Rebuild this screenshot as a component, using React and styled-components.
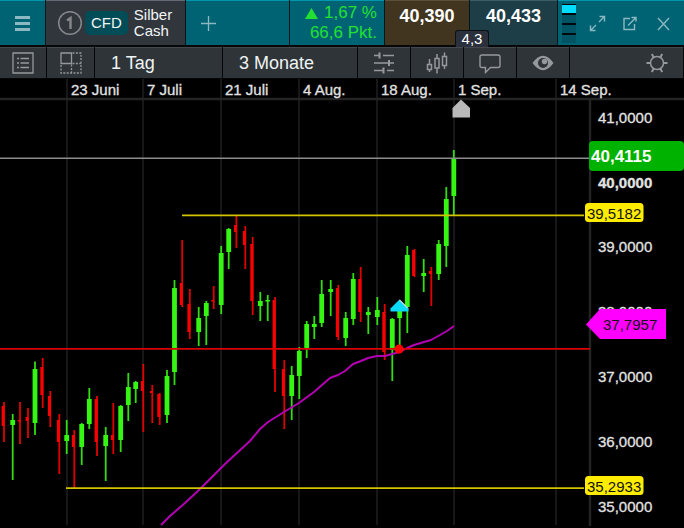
import React from "react";
import styled, { createGlobalStyle } from "styled-components";

const GlobalStyle = createGlobalStyle`
  * {
    box-sizing: border-box;
  }
  body {
    margin: 0;
    background: #000;
    font-family: "Liberation Sans", Arial, sans-serif;
  }
  button {
    font: inherit;
    color: inherit;
    border: 0;
    margin: 0;
    padding: 0;
    background: none;
    cursor: pointer;
  }
  svg {
    display: block;
  }
`;

const Header = styled.header`
  display: flex;
  gap: 1px;
  height: 45px;
  background: #00171c;
`;

const HeaderButton = styled.button`
  display: flex;
  align-items: center;
  justify-content: ${(props) => (props.$grow ? "flex-start" : "center")};
  flex: ${(props) => (props.$grow ? "1 0 auto" : "none")};
  width: ${(props) => props.$width || "auto"};
  padding: 0 15px;
  color: #8bb9c1;
  background: #006374;
  border-top: 1px solid #0098ae;
`;

const Instrument = styled.div`
  display: flex;
  align-items: center;
  width: 139px;
  padding-left: 11px;
  background: #31363c;
  border-top: 1px solid #626a76;
  color: #f2f5f6;
`;

const Badge = styled.span`
  margin: 0 6px 0 2px;
  padding: 3px 6px;
  border-radius: 5px;
  background: #004c57;
  font-size: 15px;
  line-height: 18px;
`;

const Name = styled.span`
  font-size: 15px;
  line-height: 16px;
`;

const Change = styled.div`
  width: 94px;
  padding-right: 7px;
  background: #006374;
  border-top: 1px solid #0098ae;
  color: #22e032;
  font-size: 17px;
  line-height: 20px;
  text-align: right;
  white-space: nowrap;
`;

const ChangeLine = styled.div`
  display: flex;
  align-items: center;
  justify-content: flex-end;
  gap: 6px;
  padding-top: 2px;
  height: 22px;
`;

const Quote = styled.button`
  position: relative;
  width: ${(props) => props.$width};
  height: 45px;
  padding-bottom: 14px;
  background: ${(props) => props.$color};
  border-top: 1px solid ${(props) => props.$edge};
  color: #fff;
  font-size: 18px;
  font-weight: bold;
`;

const Spread = styled.span`
  position: absolute;
  right: -20px;
  bottom: -2px;
  z-index: 1;
  width: 34px;
  height: 17px;
  border: 1px solid #0b0f16;
  border-bottom: 0;
  border-radius: 3px 3px 0 0;
  background: #2b313c;
  font-size: 15px;
  font-weight: normal;
  line-height: 16px;
  text-align: center;
`;

const WindowTools = styled.div`
  display: flex;
  align-items: center;
  width: 126px;
  padding-left: 4px;
  background: #006374;
  border-top: 1px solid #0098ae;
`;

const Meter = styled.div`
  display: flex;
  flex-direction: column;
  gap: 2px;
  margin-right: 5px;
  padding-top: 1px;
  background: #00090b;
`;

const MeterStep = styled.span`
  width: 14px;
  height: 8px;
  background: ${(props) => (props.$on ? "#00dcff" : "#005463")};
`;

const ToolIcon = styled.button`
  display: flex;
  justify-content: center;
  width: 33px;
  color: #8bb9c1;
`;

const Toolbar = styled.nav`
  display: flex;
  gap: 1px;
  height: 34px;
  padding: 2px 1px 1px 0;
  background: #060708;
`;

const ToolButton = styled.button`
  display: flex;
  align-items: center;
  justify-content: ${(props) => props.$align || "center"};
  flex: ${(props) => (props.$grow ? "1 0 auto" : "none")};
  width: ${(props) => props.$width};
  padding: ${(props) => props.$pad || "0"};
  background: #2f3438;
  border-top: 1px solid #45494d;
  color: ${(props) => (props.$text ? "#eef3f3" : "#96999b")};
  font-size: 18px;
`;

const Chart = styled.svg`
  width: 100%;
  height: auto;
`;

const AxisText = styled.text`
  fill: #e2e2e2;
  stroke: #e2e2e2;
  stroke-width: 0.3;
  font-size: 15px;
  font-weight: ${(props) => (props.$bold ? "bold" : "normal")};
`;

const TagText = styled.text`
  fill: ${(props) => props.$color || "#111"};
  font-size: ${(props) => (props.$bold ? 17 : 15)}px;
  font-weight: ${(props) => (props.$bold ? "bold" : "normal")};
`;

const dates = [
  [67, "23 Juni"],
  [143, "7 Juli"],
  [221, "21 Juli"],
  [299, "4 Aug."],
  [377, "18 Aug."],
  [454, "1 Sep."],
  [556, "14 Sep."],
];

const prices = [
  [123, "41,0000"],
  [188, "40,0000"],
  [252, "39,0000"],
  [317, "38,0000"],
  [382, "37,0000"],
  [447, "36,0000"],
  [512, "35,0000"],
];

// x, high, low, body top, body bottom, rising
const candles = [
  [4, 402, 442, 406, 426, 0],
  [12.7, 414, 480, 420, 425, 1],
  [20, 402, 444, 420, 421.5, 0],
  [28, 408, 438, 417, 421, 0],
  [35, 361.5, 435, 369, 423, 1],
  [42.7, 358, 408, 367, 395, 0],
  [50.3, 391, 427, 396, 416, 0],
  [59.3, 414, 474, 420, 442, 0],
  [66.7, 420, 454, 435, 441, 1],
  [74.3, 430, 488, 435, 447, 0],
  [81.7, 423, 465, 424, 447, 1],
  [89.3, 388, 429, 399, 424, 1],
  [97, 396, 456, 399, 442, 0],
  [105.7, 427, 481, 435, 446, 1],
  [113.3, 403, 454, 435, 440, 0],
  [120.7, 405, 452, 406, 440, 1],
  [128.3, 373, 421, 387, 405, 1],
  [135.7, 381, 403, 382, 389, 1],
  [143.3, 364, 432, 381, 391, 0],
  [152.3, 385, 423, 391, 393, 0],
  [159.7, 393, 425, 394, 417, 0],
  [167, 370, 423, 376, 415, 1],
  [174.5, 280, 385, 288, 372, 1],
  [182.2, 240, 307, 283, 305, 0],
  [189.8, 289, 339, 304, 332, 0],
  [198.7, 307, 346, 318, 332, 1],
  [206.3, 301, 345, 303, 316, 1],
  [213.7, 286, 309, 300, 301.5, 0],
  [221.2, 246, 314, 253, 305, 1],
  [228.7, 228, 269, 229, 252, 1],
  [236.4, 215, 248, 225, 232, 0],
  [245.3, 226, 269, 231, 245, 0],
  [252.7, 237, 315, 244, 301, 0],
  [260.3, 292, 321, 301, 306, 1],
  [267.7, 295, 321, 300, 301.5, 1],
  [275, 297, 392, 300, 369, 0],
  [284.3, 360, 429, 369, 396, 0],
  [291.7, 366, 420, 375, 396, 1],
  [299.3, 347, 399, 351, 376, 1],
  [306.7, 321, 358, 324, 349, 1],
  [314.3, 316, 339, 324, 327, 1],
  [321.7, 280, 327, 294, 323, 1],
  [330.7, 280, 316, 289, 292, 1],
  [338.3, 285, 340, 288, 337, 0],
  [345.7, 312, 346, 318, 338, 1],
  [353.3, 273, 325, 279, 319, 1],
  [360.7, 267, 322, 279, 312, 0],
  [368.3, 307, 334, 312, 315, 1],
  [377.3, 297, 325, 310, 317, 1],
  [384.7, 304, 360, 312, 352, 0],
  [392.3, 318, 381, 319, 350, 1],
  [399.7, 308, 348, 310, 318, 1],
  [407.3, 246, 333, 255, 307, 1],
  [414.5, 249, 277, 250, 276, 0],
  [423.7, 259, 292, 273, 276, 1],
  [431.3, 267, 306, 271, 274, 0],
  [438.7, 240, 280, 244, 274, 1],
  [446.3, 187, 267, 199, 246, 1],
  [453.8, 150, 215, 158, 196, 1],
];

const average =
  "161,525 170,516 185,503 200,489 212,477 225,464 238,452 250,441 260,429 268,422 284,412 299,403 314,392 330,378 338,375 345,371 353,364 361,361 368,358 377,356 385,356 392,354 400,352 407,348 414,345 424,342 431,340 440,335 447,331 454,326";

function Candle({ x, high, low, top, bottom, up }) {
  const color = up ? "#35f512" : "#fa0000";
  return (
    <g fill={color}>
      <rect x={x - 0.9} y={high} width={1.8} height={low - high} opacity={0.9} />
      <rect x={x - 2.4} y={top} width={up ? 4.8 : 3} height={bottom - top} />
    </g>
  );
}

function PriceChart() {
  return (
    <Chart viewBox="0 79 684 449" role="img" aria-label="Silber Cash">
      <g stroke="#1f1f1f" strokeWidth="1.5">
        {dates.map(([x]) => (
          <line key={x} x1={x} x2={x} y1="79" y2="525" />
        ))}
      </g>
      <path d="M0 99H684M590 99V526" stroke="#242424" strokeWidth="2.4" />
      {dates.map(([x, label]) => (
        <AxisText key={label} x={x + 4} y="95">
          {label}
        </AxisText>
      ))}
      {prices.map(([y, label]) => (
        <AxisText key={label} $bold={label === "40,0000"} x="598" y={y}>
          {label}
        </AxisText>
      ))}

      {candles.map(([x, high, low, top, bottom, up]) => (
        <Candle key={x} x={x} high={high} low={low} top={top} bottom={bottom} up={up} />
      ))}
      <polyline points={average} fill="none" stroke="#b400b4" strokeWidth="2" strokeLinejoin="round" />

      <path d="M0 158.3H590" stroke="#8c8c8c" strokeWidth="1.6" />
      <path d="M182 215.3H584M66 488.2H584" stroke="#d3c400" strokeWidth="1.8" />
      <path d="M0 348.8H590" stroke="#dc0000" strokeWidth="1.7" />

      <path d="M452.5 117.5V108L461 99.5L470 108V117.5Z" fill="#b9b9b9" />
      <circle cx="399" cy="349" r="4.5" fill="#f00" />
      <path d="M390.5 311.5V308.5L399.5 299.5L408.5 308.5V311.5Z" fill="#08d8fa" />
      <path d="M399.5 300L407.5 308" stroke="#c7d4d8" strokeWidth="1.3" />

      <rect x="589" y="141" width="95" height="30" rx="4" fill="#00b200" />
      <TagText $bold $color="#fff" x="591" y="162">40,4115</TagText>
      <rect x="585" y="203" width="58.5" height="19" rx="3.5" fill="#ffec00" />
      <TagText x="587" y="219">39,5182</TagText>
      <path d="M586 324.5L600 309H666V339H600Z" fill="#f0f" />
      <TagText x="603" y="330">37,7957</TagText>
      <rect x="585" y="476" width="58.5" height="19" rx="3.5" fill="#ffec00" />
      <TagText x="587" y="492">35,2933</TagText>
    </Chart>
  );
}

function Icon({ size, children, w = 1 }) {
  return (
    <svg
      width={size}
      height={size}
      viewBox={`0 0 ${size} ${size}`}
      fill="none"
      stroke="currentColor"
      strokeWidth={w}
      aria-hidden="true"
    >
      {children}
    </svg>
  );
}

export default function App() {
  return (
    <>
      <GlobalStyle />
      <Header>
        <HeaderButton aria-label="Menü" $width="45px">
          <Icon size={15} w={3}>
            <path d="M0 1.5H15M0 7.5H15M0 13.5H15" />
          </Icon>
        </HeaderButton>
        <Instrument>
          <svg width="26" height="26" viewBox="0 0 26 26" fill="none" aria-hidden="true">
            <circle cx="13" cy="13" r="11.3" stroke="#85888b" strokeWidth="1.5" />
            <path d="M10 10.5L13.5 8V19" stroke="#85888b" strokeWidth="2.4" />
          </svg>
          <Badge>CFD</Badge>
          <Name>
            Silber
            <br />
            Cash
          </Name>
        </Instrument>
        <HeaderButton $grow aria-label="Neuer Tab">
          <Icon size={15} w={1.3}>
            <path d="M7.5 0V15M0 7.5H15" />
          </Icon>
        </HeaderButton>
        <Change>
          <ChangeLine>
            <svg width="13" height="11" viewBox="0 0 13 11" aria-hidden="true">
              <path d="M0 11L6.5 0L13 11Z" fill="currentColor" />
            </svg>
            1,67 %
          </ChangeLine>
          66,6 Pkt.
        </Change>
        <Quote $width="84px" $color="#42351f" $edge="#5e5038">
          40,390
          <Spread>4,3</Spread>
        </Quote>
        <Quote $width="87px" $color="#1d3d47" $edge="#3f5d66">
          40,433
        </Quote>
        <WindowTools>
          <Meter>
            <MeterStep $on />
            <MeterStep />
            <MeterStep />
            <MeterStep />
          </Meter>
          <ToolIcon aria-label="Maximieren">
            <Icon size={17} w={1.4}>
              <path d="M10 7L15.5 1.5M10.5 1.5H15.5V6.5M7 10L1.5 15.5M1.5 10.5V15.5H6.5" />
            </Icon>
          </ToolIcon>
          <ToolIcon aria-label="Ablösen">
            <Icon size={17} w={1.4}>
              <path d="M8 3.5H2V14.5H12.5V9M6 10.5L14 2.5M9.5 2.5H14V6.5" />
            </Icon>
          </ToolIcon>
          <ToolIcon aria-label="Schließen">
            <Icon size={15} w={1.4}>
              <path d="M2 2L13 14M13 2L2 14" />
            </Icon>
          </ToolIcon>
        </WindowTools>
      </Header>

      <Toolbar>
        <ToolButton aria-label="Liste" $width="46px">
          <Icon size={22} w={1.3}>
            <path d="M1 1H21V21H1Z M8.5 6.5H17M8.5 11H17M8.5 15.5H17M5 6.5H7M5 11H7M5 15.5H7" />
          </Icon>
        </ToolButton>
        <ToolButton aria-label="Layout" $width="47px">
          <Icon size={22} w={1.3}>
            <path d="M1 1H11.5V11.5H1Z" />
            <path d="M12.5 1H21V21H1V12.5M11.5 12.5V21M12.5 11.5H21" strokeDasharray="2 1.4" />
          </Icon>
        </ToolButton>
        <ToolButton $text $width="127px" $align="flex-start" $pad="0 16px">
          1 Tag
        </ToolButton>
        <ToolButton $text $width="134px" $align="flex-start" $pad="0 16px">
          3 Monate
        </ToolButton>
        <ToolButton aria-label="Einstellungen" $width="52px">
          <Icon size={22} w={1.5}>
            <path d="M1 3.5H6M10 3.5H21M1 11H15M17 11H21M1 18.5H11M14 18.5H21" />
            <path d="M6.5 .5V6.5M16 8V14M10.5 15.5V21.5" strokeWidth="2" />
          </Icon>
        </ToolButton>
        <ToolButton aria-label="Charttyp" $width="52px">
          <Icon size={22} w={1.5}>
            <path d="M1.5 12.5H5.5V17.5H1.5ZM3.5 7V12.5M3.5 17.5V20M9 6.5H13V16H9ZM11 2V6.5M11 16V21.5M16.5 4.5H20.5V13.5H16.5ZM18.5 .5V4.5M18.5 13.5V17" />
          </Icon>
        </ToolButton>
        <ToolButton aria-label="Kommentar" $width="52px">
          <Icon size={22} w={1.4}>
            <path d="M3 3H19Q21 3 21 5V13.5Q21 15.5 19 15.5H11.5L6.5 20.5V15.5H3Q1 15.5 1 13.5V5Q1 3 3 3Z" />
          </Icon>
        </ToolButton>
        <ToolButton aria-label="Ansicht" $width="52px">
          <Icon size={22}>
            <path
              d="M0.5 11Q11 -3.5 21.5 11Q11 25.5 .5 11Z M11 6A5 5 0 1 0 16 11A5 5 0 0 0 11 6Z"
              fill="currentColor"
              fillRule="evenodd"
              stroke="none"
            />
            <circle cx="12.5" cy="9.5" r="2.7" fill="currentColor" stroke="none" />
          </Icon>
        </ToolButton>
        <ToolButton aria-label="Optionen" $grow $align="flex-end" $pad="0 15px">
          <Icon size={22} w={1.5}>
            <circle cx="11" cy="11" r="6.5" />
            <path
              d="M0.5 11H4.5M17.5 11H21.5M5.8 1.9L7.8 5.4M14.2 16.6L16.2 20.1M16.2 1.9L14.2 5.4M7.8 16.6L5.8 20.1"
              strokeWidth="2"
            />
          </Icon>
        </ToolButton>
      </Toolbar>

      <main>
        <PriceChart />
      </main>
    </>
  );
}
